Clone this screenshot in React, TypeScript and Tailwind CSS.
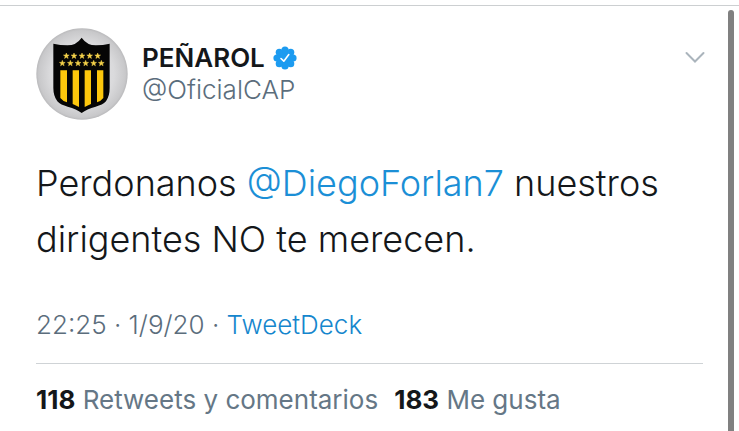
const STAR = "M0 -9 L2.2 -3 L8.6 -2.8 L3.5 1.1 L5.3 7.3 L0 3.7 L-5.3 7.3 L-3.5 1.1 L-8.6 -2.8 L-2.2 -3 Z";

const stars = [
  ...[121, 144, 168, 191, 215].map((x) => ({ x, y: 112 })),
  ...[109, 133, 156, 179, 203, 226].map((x) => ({ x, y: 134 })),
];

function Avatar() {
  return (
    <svg
      className="size-[92px] shrink-0"
      viewBox="30 28 276 276"
      role="img"
      aria-label="Escudo de Peñarol"
    >
      <defs>
        <radialGradient id="plate">
          <stop offset="0" stopColor="#e6e6e8" />
          <stop offset="0.7" stopColor="#dadadc" />
          <stop offset="0.95" stopColor="#c8c8ca" />
          <stop offset="1" stopColor="#bababc" />
        </radialGradient>
      </defs>
      <circle cx="168" cy="166" r="137" fill="url(#plate)" />
      {/* escudo */}
      <path
        d="M167 57 Q151 80 124 80 Q103 80 82 75 V208 Q82 232 94 248 Q104 259 125 264 Q152 271 167 283 Q182 271 209 264 Q230 259 240 248 Q251 232 251 208 V75 Q231 80 210 80 Q183 80 167 57 Z"
        fill="#050505"
      />
      {stars.map(({ x, y }) => (
        <path
          key={`${x}-${y}`}
          d={STAR}
          transform={`translate(${x} ${y})`}
          fill="#f5d24a"
          stroke="#f5d24a"
          strokeWidth="1.5"
        />
      ))}
      {/* franjas */}
      <path
        d="M103 155 H123 V251 Q110 247 103 238 Z M140 155 H159 V265 Q150 260 140 256 Z M176 155 H195 V256 Q185 260 176 265 Z M213 155 H232 V238 Q225 247 213 251 Z"
        fill="#fdc70c"
      />
    </svg>
  );
}

function VerifiedBadge() {
  return (
    <svg
      className="size-6 shrink-0"
      viewBox="0 0 24 24"
      role="img"
      aria-label="Cuenta verificada"
    >
      <g fill="#1c9bf0">
        <circle cx="12" cy="12" r="9" />
        <circle cx="12" cy="4" r="3.6" />
        <circle cx="17.7" cy="6.3" r="3.6" />
        <circle cx="20" cy="12" r="3.6" />
        <circle cx="17.7" cy="17.7" r="3.6" />
        <circle cx="12" cy="20" r="3.6" />
        <circle cx="6.3" cy="17.7" r="3.6" />
        <circle cx="4" cy="12" r="3.6" />
        <circle cx="6.3" cy="6.3" r="3.6" />
      </g>
      <path
        d="M8 12.5 L10.8 15.2 L15.8 8.6"
        fill="none"
        stroke="#fff"
        strokeWidth="1.6"
        strokeLinecap="round"
        strokeLinejoin="round"
      />
    </svg>
  );
}

export default function App() {
  return (
    <div className="relative min-h-screen overflow-hidden bg-white pt-[5px] font-['Inter',sans-serif] text-[#14171a]">
      <article className="border-t border-[#cccfd1] px-9 pt-[22px]">
        {/* cabecera */}
        <header className="flex items-start gap-[14px]">
          <Avatar />
          <div className="grow pt-[14px] text-[26px] leading-8">
            <div className="flex items-center gap-2">
              <h1 className="font-semibold">PEÑAROL</h1>
              <VerifiedBadge />
            </div>
            <p className="font-light text-[#5b6d7c]">@OficialCAP</p>
          </div>
          <button type="button" aria-label="Más opciones" className="mt-[18px] -mr-1">
            <svg className="size-6" viewBox="0 0 24 24" fill="none">
              <path
                d="M3.5 7 L12 15.5 L20.5 7"
                stroke="#aab4bc"
                strokeWidth="2"
                strokeLinecap="round"
              />
            </svg>
          </button>
        </header>

        {/* texto */}
        <p className="mt-[35px] text-[36px] leading-14 font-light">
          Perdonanos{" "}
          <a href="#forlan" className="text-[#1b8fd6]">
            @DiegoForlan7
          </a>{" "}
          nuestros dirigentes NO te merecen.
        </p>

        <p className="mt-[42px] text-[26px] leading-8 font-light text-[#5b6d7c]">
          22:25 · 1/9/20 ·{" "}
          <a href="#tweetdeck" className="text-[#1586cd]">
            TweetDeck
          </a>
        </p>

        {/* contadores */}
        <div className="mt-[22px] flex gap-4 border-t border-[#cfd3d6] pt-5 text-[26px] leading-8 text-[#657786]">
          <p>
            <strong className="font-bold text-[#14171a]">118</strong>{" "}
            Retweets y comentarios
          </p>
          <p>
            <strong className="font-bold text-[#14171a]">183</strong> Me
            gusta
          </p>
        </div>
      </article>

      {/* barra de desplazamiento */}
      <div className="absolute top-[10px] right-[5px] bottom-0 w-[6px] rounded-t-full bg-[#808080]" />
    </div>
  );
}
